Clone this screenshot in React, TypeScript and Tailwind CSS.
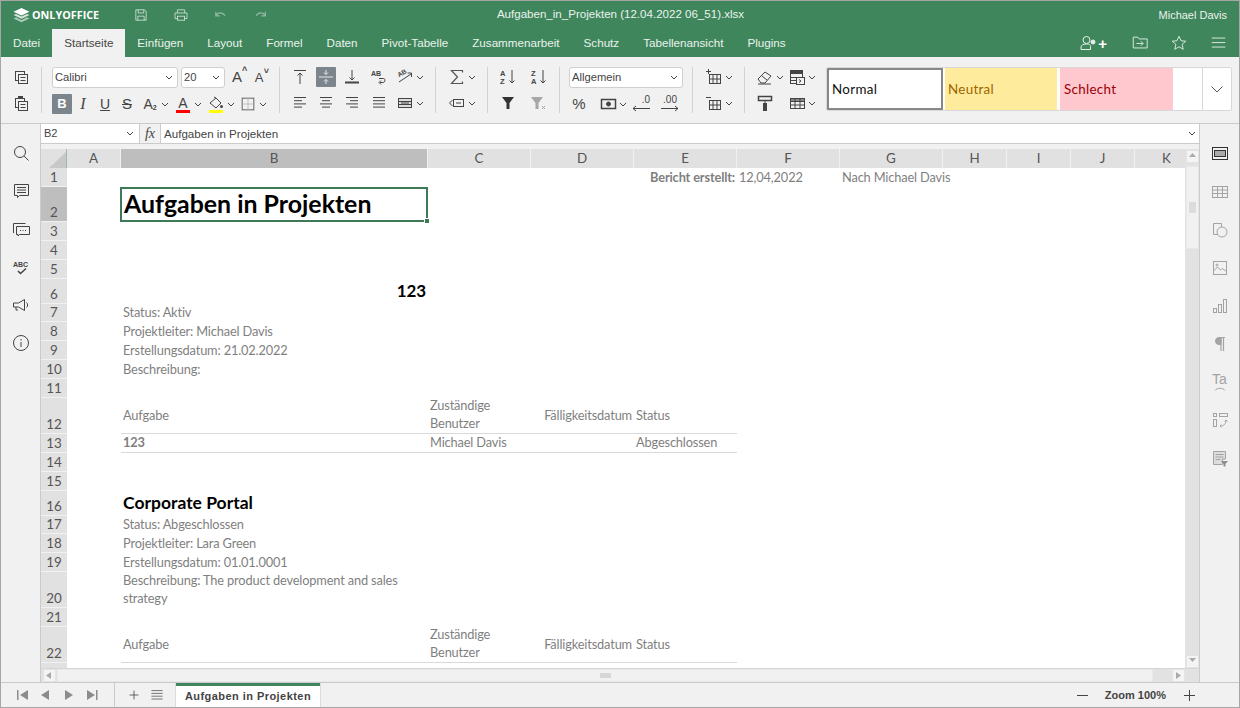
import React from 'react';

const ui = { fontFamily: '"Liberation Sans", Arial, sans-serif' };

const columns = [
  { name: '', w: 26 },
  { name: 'A', w: 54 },
  { name: 'B', w: 307 },
  { name: 'C', w: 103 },
  { name: 'D', w: 103 },
  { name: 'E', w: 103 },
  { name: 'F', w: 103 },
  { name: 'G', w: 103 },
  { name: 'H', w: 64 },
  { name: 'I', w: 64 },
  { name: 'J', w: 64 },
  { name: 'K', w: 64 },
];

// row heights, the short ones are 18.875 in the sheet
const S = 18.875;
const rowHeights = [S, 35, S, S, S, 25, S, S, S, S, S, 36, S, S, S, 25, S, S, S, 36, S, 36, 20];

type Cell = {
  r: number;
  c: number;
  text: string;
  span?: number;
  cls?: string;
};

const gray = 'items-end text-[#7f7f7f]';
const grayMid = 'items-center text-[#7f7f7f]';
const line = 'border-b border-[#d9d9d9]';
const cells: Cell[] = [
  { r: 1, c: 5, text: 'Bericht erstellt:', cls: `${gray} font-bold justify-end pr-[2px]` },
  { r: 1, c: 6, text: '12,04,2022', cls: gray },
  { r: 1, c: 7, text: 'Nach Michael Davis', cls: gray, span: 2 },
  { r: 6, c: 2, text: '123', cls: 'items-center font-bold text-[17px] text-black justify-end pr-[2px]' },
  { r: 7, c: 2, text: 'Status: Aktiv', cls: gray },
  { r: 8, c: 2, text: 'Projektleiter: Michael Davis', cls: gray },
  { r: 9, c: 2, text: 'Erstellungsdatum: 21.02.2022', cls: gray },
  { r: 10, c: 2, text: 'Beschreibung:', cls: gray },
  { r: 12, c: 2, text: 'Aufgabe', cls: `${grayMid} ${line}` },
  { r: 12, c: 3, text: 'Zuständige\nBenutzer', cls: `${gray} ${line} whitespace-pre-line` },
  { r: 12, c: 4, text: 'Fälligkeitsdatum', cls: `${grayMid} ${line} justify-end pr-[2px]` },
  { r: 12, c: 5, text: 'Status', cls: `${grayMid} ${line}` },
  { r: 13, c: 2, text: '123', cls: `${gray} font-bold ${line}` },
  { r: 13, c: 3, text: 'Michael Davis', cls: `${gray} ${line}` },
  { r: 13, c: 4, text: '', cls: line },
  { r: 13, c: 5, text: 'Abgeschlossen', cls: `${gray} ${line}` },
  { r: 16, c: 2, text: 'Corporate Portal', cls: 'items-center font-bold text-[17.5px] tracking-normal text-black' },
  { r: 17, c: 2, text: 'Status: Abgeschlossen', cls: gray },
  { r: 18, c: 2, text: 'Projektleiter: Lara Green', cls: gray },
  { r: 19, c: 2, text: 'Erstellungsdatum: 01.01.0001', cls: gray },
  { r: 20, c: 2, text: 'Beschreibung: The product development and sales\nstrategy', cls: `${gray} whitespace-pre-line` },
  { r: 22, c: 2, text: 'Aufgabe', cls: `${grayMid} ${line}` },
  { r: 22, c: 3, text: 'Zuständige\nBenutzer', cls: `${gray} ${line} whitespace-pre-line` },
  { r: 22, c: 4, text: 'Fälligkeitsdatum', cls: `${grayMid} ${line} justify-end pr-[2px]` },
  { r: 22, c: 5, text: 'Status', cls: `${grayMid} ${line}` },
  { r: 23, c: 2, text: 'Company history', cls: `${gray} font-bold` },
  { r: 23, c: 3, text: 'Michael Davis', cls: gray },
  { r: 23, c: 5, text: 'Abgeschlossen', cls: gray },
];

const tabs = ['Datei', 'Startseite', 'Einfügen', 'Layout', 'Formel', 'Daten', 'Pivot-Tabelle', 'Zusammenarbeit', 'Schutz', 'Tabellenansicht', 'Plugins'];

function Ico({ children, size = 20, color = '#444', sw = 1 }: { children: React.ReactNode; size?: number; color?: string; sw?: number }) {
  return (
    <svg width={size} height={size} viewBox="0 0 20 20" fill="none" stroke={color} strokeWidth={sw}>
      {children}
    </svg>
  );
}

function Caret({ color = '#444' }: { color?: string }) {
  return (
    <svg width="8" height="5" viewBox="0 0 8 5" fill="none" stroke={color} strokeWidth="1">
      <path d="M1 1l3 3 3-3" />
    </svg>
  );
}

function Btn({ children, caret, active, cls = '' }: { children: React.ReactNode; caret?: boolean; active?: boolean; cls?: string }) {
  return (
    <div className={`flex h-[20px] items-center ${caret ? 'w-[30px]' : 'w-[20px]'} ${cls}`}>
      <div className={`flex h-[20px] w-[20px] shrink-0 items-center justify-center rounded-[1px] ${active ? 'bg-[#7d858c]' : ''}`}>{children}</div>
      {caret && <div className="ml-[1px] flex"><Caret /></div>}
    </div>
  );
}

function Combo({ text, cls }: { text: string; cls: string }) {
  return (
    <div className={`flex h-[21px] items-center justify-between rounded-[3px] border border-[#cfcfcf] bg-white pl-[2px] pr-[4px] text-[11.2px] text-[#444] ${cls}`}>
      <span>{text}</span>
      <Caret />
    </div>
  );
}

function Sep({ cls }: { cls: string }) {
  return <div className={`h-[46px] w-px shrink-0 self-start bg-[#d2d2d2] ${cls}`} />;
}

function Rows({ children, cls = '' }: { children: React.ReactNode; cls?: string }) {
  return <div className={`flex shrink-0 flex-col gap-[6px] ${cls}`}>{children}</div>;
}

const CopyIco = () => (
  <Ico>
    <rect x="4.5" y="4.5" width="9" height="9" fill="#f1f1f1" />
    <rect x="7.5" y="7.5" width="9" height="9" fill="#f1f1f1" />
    <path d="M9.5 10.5h5M9.5 13.5h5" />
  </Ico>
);
const PasteIco = () => (
  <Ico>
    <rect x="4.5" y="5.5" width="9" height="9" fill="#f1f1f1" />
    <rect x="7.5" y="3.5" width="4" height="2" fill="#444" />
    <rect x="7.5" y="8.5" width="9" height="9" fill="#f1f1f1" />
    <path d="M9.5 11.5h5M9.5 14.5h5" />
  </Ico>
);
const Lines = ({ ys }: { ys: [number, number][] }) => (
  <Ico>
    {ys.map(([x, w], i) => (
      <path key={i} d={`M${x} ${4.5 + i * 3.2}h${w}`} />
    ))}
  </Ico>
);

function Header() {
  return (
    <div className="flex h-[28px] shrink-0 items-center bg-[#40865c] text-white">
      <div className="flex w-[120px] shrink-0 items-center pl-[12px]">
        <svg width="17" height="15" viewBox="0 0 17 15" fill="#fff">
          <path d="M8.5 0L16.5 3.7 8.5 7.4 .5 3.7z" />
          <path d="M3 5.9l5.5 2.6L14 5.9l2.5 1.2-8 3.7-8-3.7z" opacity=".8" />
          <path d="M3 9.3l5.5 2.6L14 9.3l2.5 1.2-8 3.7-8-3.7z" opacity=".55" />
        </svg>
        <span className="ml-[2px] text-[10.8px] font-bold whitespace-nowrap" style={{ fontFamily: '"Open Sans", sans-serif' }}>ONLYOFFICE</span>
      </div>
      <div className="ml-[12px] flex w-[16px] shrink-0 justify-center">
        <Ico size={20} color="#d8e7de">
          <path d="M3.5 3.5h11l2 2v11h-13z" />
          <path d="M6.5 3.5v4h7v-4M6 16.5v-5h8v5" />
        </Ico>
      </div>
      <div className="ml-[24px] flex w-[16px] shrink-0 justify-center">
        <Ico size={20} color="#d8e7de">
          <path d="M5.5 7.5v-4h9v4M5.5 14.5h-3v-7h15v7h-3" />
          <rect x="5.5" y="11.5" width="9" height="5" />
        </Ico>
      </div>
      <div className="ml-[24px] flex w-[16px] shrink-0 justify-center">
        <Ico size={20} color="#8fbaa2" sw={1.5}>
          <path d="M3.5 6v5h5M4 10.5c2-4 8-4.5 11 .5" />
        </Ico>
      </div>
      <div className="ml-[24px] flex w-[16px] shrink-0 justify-center">
        <Ico size={20} color="#8fbaa2" sw={1.5}>
          <path d="M15.5 6v5h-5M15 10.5c-2-4-8-4.5-11 .5" />
        </Ico>
      </div>
      <div className="flex-1 pl-[20px] text-center text-[11.55px] whitespace-nowrap text-[#eaf3ee]">Aufgaben_in_Projekten (12.04.2022 06_51).xlsx</div>
      <div className="w-[287px] shrink-0 pr-[12px] text-right text-[11px] text-[#eaf3ee]">Michael Davis</div>
    </div>
  );
}

function TabBar() {
  return (
    <div className="flex h-[28px] shrink-0 items-stretch bg-[#40865c] text-[11.65px]">
      {tabs.map((t) =>
        t === 'Startseite' ? (
          <div key={t} className="flex items-center bg-[#f1f1f1] px-[12px] text-[#444]">{t}</div>
        ) : (
          <div key={t} className="flex items-center px-[12px] text-[#eaf3ee]">{t}</div>
        ),
      )}
      <div className="flex-1" />
      <div className="flex items-center pr-[11px]">
        <Ico size={20} color="#e6f0ea">
          <circle cx="7.5" cy="7" r="3.5" />
          <path d="M2 16.5V14c0-1.500 2-3 5.500-3s4 1 4 2.500v3z" />
          <circle cx="14" cy="9" r="2" fill="#e6f0ea" />
        </Ico>
        <span className="ml-[-1px] text-[15px] leading-none font-bold text-white">+</span>
        <div className="ml-[24px]">
          <Ico size={18} color="#e6f0ea">
            <path d="M2.5 15.5v-12h5l1.5 2h9v10zM6 10.5h7M11 8l2.5 2.5L11 13" />
          </Ico>
        </div>
        <div className="ml-[21px]">
          <Ico size={18} color="#e6f0ea">
            <path d="M10 2.5l2.3 5 5.2.5-4 3.5 1.2 5.5-4.7-2.8-4.7 2.8 1.2-5.5-4-3.5 5.2-.5z" />
          </Ico>
        </div>
        <div className="ml-[22px]">
          <Ico size={18} color="#e6f0ea">
            <path d="M2 4.5h15M2 9.5h15M2 14.5h15" />
          </Ico>
        </div>
      </div>
    </div>
  );
}

function Toolbar() {
  return (
    <div className="flex h-[67px] shrink-0 items-start border-b border-[#cbcbcb] bg-[#f1f1f1] pt-[10px]">
      <Rows cls="ml-[10px]">
        <Btn><CopyIco /></Btn>
        <Btn><PasteIco /></Btn>
      </Rows>
      <Sep cls="ml-[10px]" />
      <Rows cls="ml-[10px]">
        <div className="flex items-center">
          <Combo text="Calibri" cls="w-[126px]" />
          <Combo text="20" cls="ml-[3px] w-[44px]" />
          <Btn cls="ml-[2px]">
            <span className="relative text-[15px] text-[#444]">A<span className="absolute top-[-3px] left-[10px] text-[9px] font-bold">˄</span></span>
          </Btn>
          <Btn cls="ml-[2px]">
            <span className="relative text-[13px] text-[#444]">A<span className="absolute top-[-3px] left-[9px] text-[9px] font-bold">˅</span></span>
          </Btn>
        </div>
        <div className="flex items-center">
          <Btn active><span className="text-[13px] font-bold text-white">B</span></Btn>
          <Btn cls="ml-[1px]"><span className="text-[16px] text-[#444] italic" style={{ fontFamily: '"Liberation Serif", serif' }}>I</span></Btn>
          <Btn cls="ml-[2px]"><span className="text-[14px] text-[#444] underline">U</span></Btn>
          <Btn cls="ml-[2px]"><span className="text-[15px] text-[#444] line-through">S</span></Btn>
          <Btn caret cls="ml-[3px]"><span className="text-[14px] text-[#444]">A<sub className="text-[7px] font-bold">2</sub></span></Btn>
          <Btn caret cls="ml-[3px]">
            <div className="flex flex-col items-center">
              <span className="text-[14px] leading-[14px] text-[#444]">A</span>
              <div className="h-[3px] w-[14px] bg-[#ff0000]" />
            </div>
          </Btn>
          <Btn caret cls="ml-[3px]">
            <div className="flex flex-col items-center">
              <svg width="16" height="14" viewBox="0 0 16 14" fill="none" stroke="#444">
                <path d="M2 7l6-5 5 5-5 5zM6 1l2 1" />
                <circle cx="13.5" cy="10.5" r="1.5" fill="#444" stroke="none" />
              </svg>
              <div className="h-[3px] w-[14px] bg-[#ffff00]" />
            </div>
          </Btn>
          <Btn caret cls="ml-[2px]">
            <Ico size={18} color="#555">
              <rect x="3.5" y="3.5" width="13" height="13" />
              <path d="M10 4v12M4 10h12" stroke="#bbb" />
            </Ico>
          </Btn>
        </div>
      </Rows>
      <Sep cls="ml-[10px]" />
      <Rows cls="ml-[10px]">
        <div className="flex items-center gap-[6px]">
          <Btn><Ico><path d="M4 3.5h12M10 6v11M7.5 8.5L10 6l2.5 2.5" /></Ico></Btn>
          <Btn active><Ico color="#e8e8e8"><path d="M3 10h14M10 3v4.5M10 12.5V17M8 5.5l2 2 2-2M8 14.5l2-2 2 2" /></Ico></Btn>
          <Btn><Ico><path d="M10 3v10M7.5 10.5L10 13l2.5-2.5" /><path d="M3 15.5h14" strokeWidth="2" /></Ico></Btn>
          <Btn cls="ml-[1px]">
            <Ico>
              <path d="M10 11.5h4.5c2 0 2 4-.5 4h-3M12 13.5l-2 2 2 2" />
              <text x="2" y="9" fontSize="7" fontWeight="700" fill="#444" stroke="none">AB</text>
            </Ico>
          </Btn>
          <Btn caret>
            <Ico>
              <path d="M4 15l12-8M12.5 6H16.5v4" />
              <text x="3" y="9" fontSize="6.5" fontWeight="700" fill="#444" stroke="none" transform="rotate(-30 6 8)">AB</text>
            </Ico>
          </Btn>
        </div>
        <div className="flex items-center gap-[6px]">
          <Btn><Lines ys={[[4, 12], [4, 8], [4, 12], [4, 8]]} /></Btn>
          <Btn><Lines ys={[[4, 12], [6, 8], [4, 12], [6, 8]]} /></Btn>
          <Btn><Lines ys={[[4, 12], [8, 8], [4, 12], [8, 8]]} /></Btn>
          <Btn cls="ml-[1px]"><Lines ys={[[4, 12], [4, 12], [4, 12], [4, 12]]} /></Btn>
          <Btn caret>
            <Ico>
              <rect x="3.5" y="5.5" width="13" height="9" fill="#ddd" />
              <path d="M3.5 8.5h13M3.5 11.5h13M6 10h8" />
            </Ico>
          </Btn>
        </div>
      </Rows>
      <Sep cls="ml-[10px]" />
      <Rows cls="ml-[11px]">
        <Btn caret><Ico color="#555" sw={1.2}><path d="M15.5 5.5v-2h-11l6 6.5-6 6.5h11v-2" /></Ico></Btn>
        <Btn caret>
          <Ico>
            <rect x="6.5" y="6.5" width="10" height="7" />
            <path d="M5.5 7L2.5 10l3 3M9 10h5" />
          </Ico>
        </Btn>
      </Rows>
      <Sep cls="ml-[10px]" />
      <Rows cls="ml-[10px]">
        <div className="flex gap-[11px]">
          <Btn>
            <Ico>
              <text x="2" y="9" fontSize="7.5" fontWeight="700" fill="#444" stroke="none">A</text>
              <text x="2" y="17" fontSize="7.5" fontWeight="700" fill="#444" stroke="none">Z</text>
              <path d="M14 3v13M11.5 13.5L14 16l2.5-2.5" />
            </Ico>
          </Btn>
          <Btn>
            <Ico>
              <text x="2" y="9" fontSize="7.5" fontWeight="700" fill="#444" stroke="none">Z</text>
              <text x="2" y="17" fontSize="7.5" fontWeight="700" fill="#444" stroke="none">A</text>
              <path d="M14 3v13M11.5 13.5L14 16l2.5-2.5" />
            </Ico>
          </Btn>
        </div>
        <div className="flex gap-[11px]">
          <Btn><svg width="14" height="14" viewBox="0 0 14 14" fill="#333"><path d="M1 1h12L8.5 7v6h-3V7z" /></svg></Btn>
          <Btn>
            <svg width="18" height="14" viewBox="0 0 18 14" fill="#a6a6a6">
              <path d="M1 1h12L8.5 7v6h-3V7z" />
              <path d="M12 10l3 3M15 10l-3 3" stroke="#a6a6a6" />
            </svg>
          </Btn>
        </div>
      </Rows>
      <Sep cls="ml-[10px]" />
      <Rows cls="ml-[9px]">
        <Combo text="Allgemein" cls="w-[114px]" />
        <div className="flex items-center">
          <Btn><span className="text-[15px] text-[#444]">%</span></Btn>
          <Btn caret cls="ml-[9px]">
            <Ico>
              <rect x="3.5" y="5.5" width="14" height="9" strokeWidth="1.5" />
              <circle cx="10.5" cy="10" r="2" fill="#444" />
            </Ico>
          </Btn>
          <div className="ml-[3px] flex h-[20px] w-[20px] flex-col items-end text-[10px] leading-[11px] text-[#444]">
            <span className="pr-[1px]">.0</span>
            <svg width="20" height="7" viewBox="0 0 20 7" fill="none" stroke="#444"><path d="M19 3.5H2M5 1L2 3.5 5 6" /></svg>
          </div>
          <div className="ml-[9px] flex h-[20px] w-[20px] flex-col items-center text-[10px] leading-[11px] text-[#444]">
            <span>.00</span>
            <svg width="20" height="7" viewBox="0 0 20 7" fill="none" stroke="#444"><path d="M1 3.5h17M15 1l3 2.5L15 6" /></svg>
          </div>
        </div>
      </Rows>
      <Sep cls="ml-[9px]" />
      <Rows cls="ml-[11px]">
        <Btn caret>
          <Ico>
            <rect x="5.5" y="7.5" width="11" height="9" />
            <path d="M9 8v8M13 8v8M6 12h10M2 4.5h5M4.5 2v5" />
          </Ico>
        </Btn>
        <Btn caret>
          <Ico>
            <rect x="5.5" y="7.5" width="11" height="9" />
            <path d="M9 8v8M13 8v8M6 12h10M2 4.5h5" />
          </Ico>
        </Btn>
      </Rows>
      <Sep cls="ml-[10px]" />
      <Rows cls="ml-[10px]">
        <div className="flex gap-[2px]">
          <Btn caret><Ico><path d="M3 12l7-7 6 4-6 7H6zM7 9l5 4M3 17h13" /></Ico></Btn>
          <Btn caret>
            <Ico>
              <rect x="3.5" y="3.5" width="12" height="13" />
              <path d="M3.5 3.5h12v3h-12z" fill="#444" />
              <rect x="9.5" y="10.5" width="8" height="7" fill="#f1f1f1" />
              <path d="M12 12.5l2 1.5-2 1.5M4 10.5h5M4 13.5h5" />
            </Ico>
          </Btn>
        </div>
        <div className="flex gap-[2px]">
          <Btn>
            <Ico>
              <rect x="3.5" y="3.5" width="13" height="4" strokeWidth="1.5" />
              <path d="M10 8v2" />
              <rect x="8.5" y="10.5" width="3" height="7" fill="#444" />
            </Ico>
          </Btn>
          <Btn caret cls="ml-[10px]">
            <Ico>
              <rect x="3.5" y="5.5" width="14" height="10" />
              <path d="M3.5 5.5h14v3h-14z" fill="#888" />
              <path d="M8 6v9M13 6v9M4 12h13" />
            </Ico>
          </Btn>
        </div>
      </Rows>
      <div className="ml-[9px] flex h-[44px] w-[406px] shrink-0 overflow-hidden rounded-[2px] border border-[#d8d8d8] bg-white text-[13.4px] tracking-[0.3px]" style={{ fontFamily: 'Lato, sans-serif' }}>
        <div className="flex w-[116px] shrink-0 items-center border-2 border-[#888] bg-white pl-[3px] text-[#111]">Normal</div>
        <div className="ml-[2px] flex w-[112px] shrink-0 items-center bg-[#ffeb9c] pl-[3px] text-[#9c6500]">Neutral</div>
        <div className="ml-[3px] flex w-[113px] shrink-0 items-center bg-[#ffc7ce] pl-[4px] text-[#9c0006]">Schlecht</div>
        <div className="flex-1" />
        <div className="flex w-[29px] shrink-0 items-center justify-center border-l border-[#d8d8d8]">
          <svg width="12" height="7" viewBox="0 0 12 7" fill="none" stroke="#555"><path d="M.5.5L6 6 11.5.5" /></svg>
        </div>
      </div>
    </div>
  );
}

function LeftRail() {
  return (
    <div className="flex w-[40px] shrink-0 flex-col items-center gap-[18px] border-r border-[#cbcbcb] bg-[#f1f1f1] pt-[19px]">
      <Ico><circle cx="9" cy="9" r="5.5" /><path d="M13 13l4.5 4.5" /></Ico>
      <Ico>
        <path d="M3.5 3.5h14v11h-9l-2 2v-2h-3z" />
        <path d="M6 6.5h9M6 9h9M6 11.5h9" />
      </Ico>
      <Ico>
        <path d="M2.5 14V4.5h12" />
        <path d="M5.5 7.5h13v8h-10l-1.5 1.5v-1.5h-1.5z" />
        <path d="M9 11.5h1M11.5 11.5h1M14 11.5h1" />
      </Ico>
      <Ico>
        <text x="2" y="10" fontSize="7" fontWeight="700" fill="#444" stroke="none" style={ui}>ABC</text>
        <path d="M7 14l2.5 2.5L15 11.5" strokeWidth="1.5" />
      </Ico>
      <Ico>
        <path d="M2.5 8h5l6-3.5v11L7.5 12h-5z" />
        <path d="M5 12v3h2M15.5 7.5c1.5 1 1.5 4 0 5" />
      </Ico>
      <Ico><circle cx="10" cy="10" r="7.5" /><path d="M10 9v5M10 6v1.5" /></Ico>
    </div>
  );
}

function RightRail() {
  return (
    <div className="flex w-[40px] shrink-0 flex-col items-center gap-[18px] border-l border-[#cbcbcb] bg-[#f1f1f1] pt-[20px]">
      <Ico color="#333">
        <rect x="2.5" y="3.5" width="15" height="12" />
        <rect x="4.5" y="6.5" width="11" height="6" fill="#aaa" />
      </Ico>
      <Ico color="#a3a3a3">
        <rect x="2.5" y="4.5" width="15" height="11" />
        <path d="M2.5 8h15M2.5 11.5h15M7.5 5v10M12.5 5v10" />
      </Ico>
      <Ico color="#a3a3a3">
        <path d="M8 14.5H3.5v-11h8V7" />
        <circle cx="12" cy="12" r="5" />
      </Ico>
      <Ico color="#a3a3a3">
        <rect x="3.5" y="3.5" width="13" height="13" />
        <circle cx="7" cy="7" r="1" />
        <path d="M3.5 13l4-4 3 3 2-1.5 4 3" />
      </Ico>
      <Ico color="#a3a3a3">
        <rect x="3.5" y="12.5" width="3" height="4" />
        <rect x="8.5" y="8.5" width="3" height="8" />
        <rect x="13.5" y="3.5" width="3" height="13" />
      </Ico>
      <Ico color="#a3a3a3">
        <path d="M9 3.5h6M11 4v13M13.5 4v13" strokeWidth="1.2" />
        <path d="M9 3.5a3.5 3.5 0 0 0 0 7h2v-7z" fill="#a3a3a3" />
      </Ico>
      <div className="flex h-[20px] w-[20px] flex-col items-center text-[14px] leading-[15px] text-[#a3a3a3]">
        <span>Ta</span>
        <svg width="12" height="4" viewBox="0 0 12 4" fill="none" stroke="#a3a3a3"><path d="M1 3.5C3 .5 9 .5 11 3.5" /></svg>
      </div>
      <Ico color="#a3a3a3">
        <rect x="3.5" y="3.5" width="3" height="3" />
        <rect x="3.5" y="9.5" width="3" height="7" />
        <rect x="9.5" y="3.5" width="8" height="3" />
        <path d="M10 16c4 0 6-2 6-6M14.5 11.5L16 10l1.5 1.5M11.5 14.5L10 16l1.5 1.5" />
      </Ico>
      <Ico color="#a3a3a3">
        <path d="M3.5 3.5h12V11h-3v5.5h-9z" fill="#ddd" />
        <path d="M5.5 6.5h8M5.5 9h8M5.5 11.5h5" />
        <path d="M11 13h7l-2.5 3v2.5h-2V16z" fill="#8f8f8f" stroke="none" />
      </Ico>
    </div>
  );
}

function FormulaBar() {
  return (
    <div className="flex h-[25px] shrink-0 items-start bg-[#f1f1f1]">
      <div className="flex h-[20px] flex-1 items-center border-b border-[#cbcbcb] bg-white text-[11px] text-[#444]">
        <div className="flex h-full w-[99px] shrink-0 items-center justify-between border-r border-[#cbcbcb] pr-[5px] pl-[3px]">
          <span>B2</span>
          <Caret />
        </div>
        <div className="flex h-full w-[21px] shrink-0 items-center justify-center border-r border-[#cbcbcb] bg-[#f1f1f1] text-[14px] text-[#444] italic" style={{ fontFamily: '"Liberation Serif", serif' }}>fx</div>
        <div className="flex-1 pl-[3px] text-[11.6px]">Aufgaben in Projekten</div>
        <div className="pr-[3px]"><Caret /></div>
      </div>
    </div>
  );
}

function Sheet() {
  const gridTemplateColumns = columns.map((c) => `${c.w}px`).join(' ');
  const gridTemplateRows = ['19px', ...rowHeights.map((h) => `${h}px`)].join(' ');
  return (
    <div className="min-w-0 flex-1 overflow-hidden bg-white" style={{ fontFamily: 'Lato, sans-serif' }}>
      <div className="grid text-[12.8px] tracking-[-0.15px]" style={{ gridTemplateColumns, gridTemplateRows }}>
        {columns.map((c, i) =>
          i === 0 ? (
            <div key="corner" className="flex items-end justify-end border-r border-[#9fb8a8] bg-[#e1e1e1]">
              <svg width="17" height="16" viewBox="0 0 17 16" fill="#c8c8c8"><path d="M17 0v16H0z" /></svg>
            </div>
          ) : (
            <div
              key={c.name}
              className={`flex items-center justify-center border-r border-[#f1f1f1] text-[13.4px] tracking-normal text-[#555] ${c.name === 'B' ? 'bg-[#bebebe]' : 'bg-[#e1e1e1]'}`}
              style={{ gridColumn: i + 1, gridRow: 1 }}
            >
              {c.name}
            </div>
          ),
        )}
        {rowHeights.map((_, i) => (
          <div
            key={i}
            className={`flex items-end justify-center border-b border-[#f1f1f1] pb-[1px] text-[13.4px] leading-[16px] tracking-normal text-[#555] ${i === 1 ? 'bg-[#bebebe]' : 'bg-[#e1e1e1]'}`}
            style={{ gridColumn: 1, gridRow: i + 2 }}
          >
            {i + 1}
          </div>
        ))}
        {cells.map((cell, i) => (
          <div
            key={i}
            className={`flex min-w-0 pb-[1px] pl-[2px] leading-[18px] whitespace-nowrap ${cell.cls ?? ''}`}
            style={{ gridColumn: `${cell.c + 1} / span ${cell.span ?? 1}`, gridRow: cell.r + 1 }}
          >
            {cell.text}
          </div>
        ))}
        <div className="relative z-10 ml-[-1px] flex items-center border-2 border-[#3f7a58] pb-[2px] pl-[2px] text-[24.9px] leading-none font-bold tracking-normal whitespace-nowrap text-black" style={{ gridColumn: 3, gridRow: 3 }}>
          Aufgaben in Projekten
          <div className="absolute right-[-4px] bottom-[-4px] h-[6px] w-[6px] border border-white bg-[#3f7a58]" />
        </div>
      </div>
    </div>
  );
}

function ScrollBtn({ dir }: { dir: 'up' | 'down' | 'left' | 'right' }) {
  const d = { up: 'M1 5L4.5 1 8 5z', down: 'M1 1l3.5 4L8 1z', left: 'M6 1L1 4.5 6 8z', right: 'M2 1l5 3.5L2 8z' }[dir];
  return (
    <div className="flex h-[13px] w-[13px] shrink-0 items-center justify-center border border-[#e4e4e4] bg-[#f4f4f4]">
      <svg width="9" height="9" viewBox="0 0 9 9" fill="#aaa"><path d={d} /></svg>
    </div>
  );
}

function VScroll() {
  return (
    <div className="flex w-[14px] shrink-0 flex-col items-center bg-[#e2e2e2] pt-px">
      <ScrollBtn dir="up" />
      <div className="mt-[3px] flex h-[83px] w-[13px] items-center justify-center border border-[#e8e8e8] bg-[#f1f1f1]">
        <div className="h-[11px] w-[7px] bg-[#dcdcdc]" />
      </div>
      <div className="flex-1" />
      <ScrollBtn dir="down" />
    </div>
  );
}

function HScroll() {
  return (
    <div className="flex h-[14px] shrink-0 items-center border-t border-[#d5d5d5] bg-[#e2e2e2] pl-[2px]">
      <ScrollBtn dir="left" />
      <div className="ml-[1px] flex h-[13px] w-[1096px] shrink-0 items-center justify-center border border-[#e8e8e8] bg-[#f1f1f1]">
        <div className="h-[5px] w-[11px] bg-[#d6d6d6]" />
      </div>
      <div className="flex-1" />
      <div className="mr-[14px]"><ScrollBtn dir="right" /></div>
    </div>
  );
}

function BottomBar() {
  return (
    <div className="flex h-[25px] shrink-0 items-stretch border-t border-[#cbcbcb] bg-[#f1f1f1]">
      <div className="flex w-[114px] shrink-0 items-center border-r border-[#cbcbcb] pl-[15px]">
        <svg width="90" height="12" viewBox="0 0 90 12" fill="#8c8c8c">
          <path d="M1 1h1.5v10H1zM12 1v10L4 6z" />
          <path d="M33 1v10l-8-5z" />
          <path d="M49 1v10l8-5z" />
          <path d="M71 1v10l8-5zM80 1h1.5v10H80z" />
        </svg>
      </div>
      <div className="flex w-[60px] shrink-0 items-center pl-[11px]">
        <Ico size={16}><path d="M8 2.5v11M2.5 8h11" transform="translate(2 2)" /></Ico>
        <div className="ml-[7px]">
          <Ico size={16} color="#555"><path d="M3 4.5h14M3 8h14M3 11.5h14M3 15h14" /></Ico>
        </div>
      </div>
      <div className="flex w-[146px] shrink-0 flex-col border-x border-[#dcdcdc] bg-white">
        <div className="h-[3px] bg-[#40865c]" />
        <div className="flex flex-1 items-center justify-center text-[11px] font-bold tracking-[0.45px] text-[#444]">Aufgaben in Projekten</div>
      </div>
      <div className="flex-1" />
      <div className="flex items-center pr-[44px] text-[#444]">
        <div className="h-px w-[11px] bg-[#444]" />
        <span className="ml-[17px] text-[11px] font-bold">Zoom 100%</span>
        <div className="ml-[18px]">
          <svg width="11" height="11" viewBox="0 0 11 11" fill="none" stroke="#444"><path d="M5.5 0v11M0 5.5h11" /></svg>
        </div>
      </div>
    </div>
  );
}

export default function App() {
  return (
    <div className="flex h-[708px] w-[1240px] flex-col overflow-hidden border border-[#a6a6a6] bg-[#f1f1f1]" style={ui}>
      <Header />
      <TabBar />
      <Toolbar />
      <div className="flex min-h-0 flex-1">
        <LeftRail />
        <div className="flex min-w-0 flex-1 flex-col">
          <FormulaBar />
          <div className="flex min-h-0 flex-1">
            <Sheet />
            <VScroll />
          </div>
          <HScroll />
        </div>
        <RightRail />
      </div>
      <BottomBar />
    </div>
  );
}
